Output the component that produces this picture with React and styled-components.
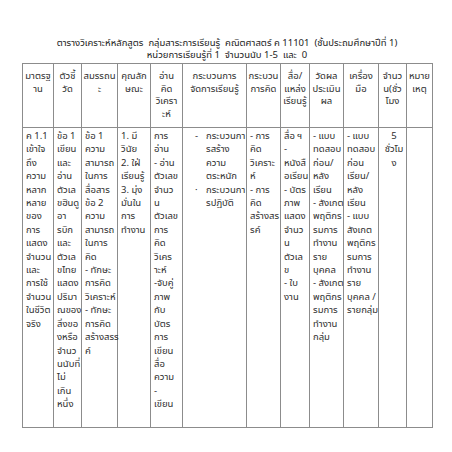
import styled, { createGlobalStyle } from "styled-components";

const GlobalStyle = createGlobalStyle`
  html, body {
    margin: 0;
    padding: 0;
    background: #ffffff;
  }
  body {
    font-family: "Noto Sans", "Noto Sans Thai", "Tahoma", "DejaVu Sans", sans-serif;
    color: #2b2b2b;
  }
`;

const columns = [31, 28, 36, 33, 32, 64, 34, 29, 34, 35, 28, 26];

const headers = [
  ["มาตรฐ", "าน"],
  ["ตัวชี้", "วัด"],
  ["สมรรถน", "ะ"],
  ["คุณลัก", "ษณะ"],
  ["อ่าน", "คิด", "วิเครา", "ะห์"],
  ["กระบวนการ", "จัดการเรียนรู้"],
  ["กระบวน", "การคิด"],
  ["สื่อ/", "แหล่ง", "เรียนรู้"],
  ["วัดผล", "ประเมิน", "ผล"],
  ["เครื่อง", "มือ"],
  ["จำนว", "น(ชั่ว", "โมง"],
  ["หมาย", "เหตุ"],
];

const body = [
  ["ค 1.1", "เข้าใจ", "ถึง", "ความ", "หลาก", "หลาย", "ของ", "การ", "แสดง", "จำนวน", "และ", "การใช้", "จำนวน", "ในชีวิต", "จริง"],
  ["ข้อ 1", "เขียน", "และ", "อ่าน", "ตัวเล", "ขฮินดู", "อา", "รบิก", "และ", "ตัวเล", "ขไทย", "แสดง", "ปริมา", "ณของ", "สิ่งขอ", "งหรือ", "จำนว", "นนับที่", "ไม่", "เกิน", "หนึ่ง"],
  ["ข้อ 1", "ความ", "สามารถ", "ในการ", "สื่อสาร", "ข้อ 2", "ความ", "สามารถ", "ในการ", "คิด", "- ทักษะ", "การคิด", "วิเคราะห์", "- ทักษะ", "การคิด", "สร้างสรร", "ค์"],
  ["1. มี", "วินัย", "2. ใฝ่", "เรียนรู้", "3. มุ่ง", "มั่นใน", "การ", "ทำงาน"],
  ["การ", "อ่าน", "- อ่าน", "ตัวเลข", "จำนว", "น", "ตัวเลข", "การ", "คิด", "วิเคร", "าะห์", "-จับคู่", "ภาพ", "กับ", "บัตร", "การ", "เขียน", "สื่อ", "ความ", "-", "เขียน"],
  null,
  ["- การ", "คิด", "วิเคราะ", "ห์", "- การ", "คิด", "สร้างสร", "รค์"],
  ["สื่อ ฯ", "-", "หนังสื", "อเรียน", "- บัตร", "ภาพ", "แสดง", "จำนว", "น", "ตัวเล", "ข", "- ใบ", "งาน"],
  ["- แบบ", "ทดสอบ", "ก่อน/", "หลัง", "เรียน", "- สังเกต", "พฤติกร", "รมการ", "ทำงาน", "ราย", "บุคคล", "- สังเกต", "พฤติกร", "รมการ", "ทำงาน", "กลุ่ม"],
  ["- แบบ", "ทดสอบ", "ก่อน", "เรียน/", "หลัง", "เรียน", "- แบบ", "สังเกต", "พฤติกร", "รมการ", "ทำงาน", "ราย", "บุคคล /", "รายกลุ่ม"],
  ["5", "ชั่วโม", "ง"],
  [],
];

const processes = [
  { mark: "-", lines: ["กระบวนกา", "รสร้าง", "ความ", "ตระหนัก"] },
  { mark: "·", lines: ["กระบวนกา", "รปฏิบัติ"] },
];

const App = () => {
  return (
    <Page>
      <GlobalStyle />
      <Title>
        <div>ตารางวิเคราะห์หลักสูตร&nbsp; กลุ่มสาระการเรียนรู้&nbsp; คณิตศาสตร์ ค 11101&nbsp; (ชั้นประถมศึกษาปีที่ 1)</div>
        <div>หน่วยการเรียนรู้ที่ 1&nbsp; จำนวนนับ 1-5&nbsp; และ&nbsp; 0</div>
      </Title>
      <Table>
        <colgroup>
          {columns.map((w, i) => (
            <col key={i} style={{ width: w }} />
          ))}
        </colgroup>
        <thead>
          <tr>
            {headers.map((lines, i) => (
              <HeadCell key={i}>
                {lines.map((l, j) => (
                  <Line key={j}>{l}</Line>
                ))}
              </HeadCell>
            ))}
          </tr>
        </thead>
        <tbody>
          <BodyRow>
            {body.map((lines, i) =>
              lines === null ? (
                <BodyCell key={i}>
                  {processes.map((p, k) => (
                    <Bullet key={k}>
                      <Mark>{p.mark}</Mark>
                      <div>
                        {p.lines.map((l, j) => (
                          <Line key={j}>{l}</Line>
                        ))}
                      </div>
                    </Bullet>
                  ))}
                </BodyCell>
              ) : (
                <BodyCell key={i} $center={i === 10}>
                  {lines.map((l, j) => (
                    <Line key={j}>{l}</Line>
                  ))}
                </BodyCell>
              )
            )}
          </BodyRow>
        </tbody>
      </Table>
    </Page>
  );
};

export default App;

const Page = styled.div`
  width: 452px;
  height: 452px;
  padding: 37px 0 0 22px;
  box-sizing: border-box;
  overflow: hidden;
`;

const Title = styled.div`
  width: 410px;
  text-align: center;
  font-size: 9.5px;
  line-height: 12px;
  color: #222;
  margin-bottom: 2px;
  white-space: nowrap;
`;

const Table = styled.table`
  width: 410px;
  table-layout: fixed;
  border-collapse: collapse;
  font-size: 9.5px;
  color: #2e2e2e;
`;

const HeadCell = styled.th`
  border: 1px solid #8c8c8c;
  font-weight: normal;
  text-align: center;
  vertical-align: top;
  padding: 6px 0 3px;
  height: 54px;
  line-height: 12.5px;
  overflow: visible;
`;

const BodyRow = styled.tr`
  height: 300px;
`;

const BodyCell = styled.td`
  border: 1px solid #8c8c8c;
  border-top-color: #5a5a5a;
  vertical-align: top;
  text-align: ${(p) => (p.$center ? "center" : "left")};
  padding: 1px 0 0 3px;
  line-height: 13.4px;
`;

const Line = styled.div`
  white-space: nowrap;
`;

const Bullet = styled.div`
  display: flex;
  padding-left: 9px;
`;

const Mark = styled.span`
  width: 11px;
  flex: none;
`;
